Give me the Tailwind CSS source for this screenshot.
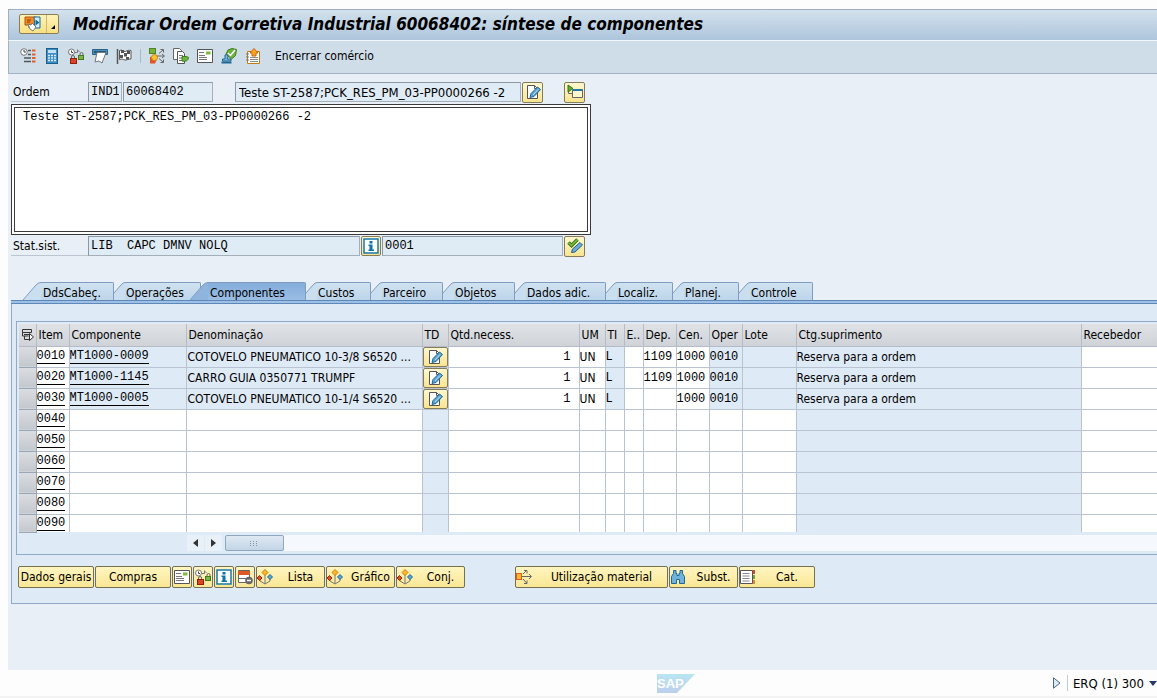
<!DOCTYPE html>
<html lang="pt-BR">
<head>
<meta charset="utf-8">
<title>Modificar Ordem Corretiva Industrial 60068402: síntese de componentes</title>
<script src="https://cdn.jsdelivr.net/npm/@tailwindcss/browser@4"></script>
</head>
<body class="min-h-screen flex flex-col overflow-x-hidden bg-[#fdfdfe] font-['DejaVu_Sans_Condensed','Noto_Sans',sans-serif] text-[12px] leading-4 text-black">
<svg class="hidden" aria-hidden="true">
  <symbol id="i-services" viewBox="0 0 20 18">
    <path d="M2 2h11v8H9l-3 3v-3H2z" fill="#f08a24" stroke="#b4500c"/><path d="M4 5h4M4 7h3" stroke="#8a3a08"/>
    <path d="M11 2h6v11h-5z" fill="#d6ecfa" stroke="#146a9c"/><path d="M12.500 4.500l4 3-4 3z" fill="#146a9c"/>
    <path d="M5 9l3 1 1-2 4 4-3 4-3-2z" fill="#fff" stroke="#7a7a7a"/>
  </symbol>
  <symbol id="i-clocklist" viewBox="0 0 16 16">
    <circle cx="4" cy="4" r="3.3" fill="#fff" stroke="#777"/><path d="M4 2v2h2" fill="none" stroke="#444"/>
    <path d="M8 2.500h3M8 6.500h3M4 10h7M4 13.500h7" stroke="#555" stroke-width="1.500"/><path d="M12 2.500h3.500M12 6.500h3.500M12 10h3.500M12 13.500h3.500" stroke="#e0602c" stroke-width="2"/>
  </symbol>
  <symbol id="i-calc" viewBox="0 0 16 16">
    <rect x="2.500" y=".5" width="11" height="15" fill="#3f8fc4" stroke="#1b5f8f"/><rect x="4" y="2" width="8" height="3" fill="#c4e2f4"/>
    <path d="M4 7.500h8M4 10h8M4 12.500h8" stroke="#d9eefa" stroke-width="1.500" stroke-dasharray="2 1"/>
  </symbol>
  <symbol id="i-clocklock" viewBox="0 0 16 16">
    <circle cx="3.500" cy="4" r="3" fill="#fff" stroke="#777"/><path d="M3.500 2.500v2H5" fill="none" stroke="#444"/>
    <path d="M7 4.500h2.500V1.500M9.500 2l2 2" fill="none" stroke="#777"/>
    <path d="M12 8V6a1.500 1.500 0 0 1 3 0v2" fill="none" stroke="#666"/><rect x="10.500" y="7.500" width="5" height="4" fill="#7ab648" stroke="#44791d"/>
    <path d="M3.500 11V9a1.500 1.500 0 0 1 3 0v2" fill="none" stroke="#666"/><rect x="2.500" y="10.500" width="6" height="5" fill="#d9472b" stroke="#94200c"/>
  </symbol>
  <symbol id="i-print" viewBox="0 0 16 16">
    <path d="M.5 1.500h15v5h-15z" fill="#4c8fb9" stroke="#2b6289"/><path d="M2 4h12" stroke="#1b4462" stroke-width="1.500"/>
    <path d="M5 4.500h9l-4 10.500-3-2-4 1z" fill="#fff" stroke="#6d7780"/>
  </symbol>
  <symbol id="i-flag" viewBox="0 0 16 16">
    <path d="M1.500 1v15" stroke="#555" stroke-width="1.500"/><path d="M3.500 2.500c3-1.500 3 1.500 6 1 2-1 3-1.500 5.500-1v8.500c-3-.5-4 1.500-6 1s-3-1.500-5.500-.5z" fill="#fff" stroke="#555"/>
    <path d="M5 2h3v3H5zM11 3h3v3h-3zM8 5h3v3.500H8zM4 7h3v3H4zM10 9h3v2.500h-3z" fill="#555"/>
  </symbol>
  <symbol id="i-puzzle" viewBox="0 0 16 16">
    <rect x=".5" y=".5" width="6" height="5" fill="#74b23c" stroke="#4b8420"/><path d="M1 15.500V9l4-1 3 3-2 4.500z" fill="#e2532a"/><circle cx="5.500" cy="9.500" r="3" fill="#f9c230" stroke="#c98a0c"/>
    <path d="M8 8h7M10 5.500l4-3.500M10 10.500l4 3.500" stroke="#666"/><path d="M13 6l2.500 2-2.500 2M11.500 1.500h3v3M11.500 14.500h3v-3" fill="none" stroke="#666"/>
  </symbol>
  <symbol id="i-copies" viewBox="0 0 16 16">
    <path d="M.5.500h6l2 2v9h-8z" fill="#fff" stroke="#666"/><path d="M4.500 3.500h5l2 2v10h-7z" fill="#fff" stroke="#555"/><path d="M6 7.500h4M6 10h4M6 12.500h4" stroke="#777"/>
    <path d="M9 8.500h3c3 0 3.500 1 3.500 1 0 3-3 4.500-6.500 3.500z" fill="#6cb33f" stroke="#3c7d17"/>
  </symbol>
  <symbol id="i-note" viewBox="0 0 16 16">
    <path d="M.5 1.500h15v13H.5z" fill="#fff" stroke="#555"/><path d="M2 4.500h5M2 7.500h6M2 9.500h8M2 11.500h8" stroke="#777"/><rect x="9" y="3.500" width="4.500" height="3" fill="#7eb83f"/>
  </symbol>
  <symbol id="i-stamp" viewBox="0 0 16 16">
    <path d="M5 6l2-4 4-1.500 4.500 1-1 6-4 3.500z" fill="#6cb33f" stroke="#3c7d17"/><path d="M7 5l2.500 2.500L14 2" fill="none" stroke="#fff" stroke-width="1.500"/>
    <path d="M4 7a2 2 0 0 1 3 2l-1 2h4v2H1.500v-2H4z" fill="#7dbbe0" stroke="#1f6795"/><path d="M.5 14.500h10" stroke="#1f6795" stroke-width="2"/>
  </symbol>
  <symbol id="i-book" viewBox="0 0 16 16">
    <path d="M2.500 3.500h12v12h-12z" fill="#fff" stroke="#c27c14"/><path d="M1 6h3M1 9h3M1 12h3" stroke="#777"/><path d="M5 9.500h8M5 11.500h8M5 13.500h8" stroke="#888"/>
    <path d="M9 .5l4 4.500h-2v3H7V5H5z" fill="#f7a823" stroke="#d4610f"/>
  </symbol>
  <symbol id="i-edit" viewBox="0 0 16 16">
    <path d="M2.500 1.500h7l3 3v10h-10z" fill="#fff" stroke="#555"/><path d="M9.500 1.500v3h3" fill="none" stroke="#555"/>
    <path d="M5 13.500l1-4 6.500-6.500 3 2.500-6.500 7z" fill="#5ba3d0" stroke="#1f6795"/><path d="M8 11l5-5.500" stroke="#bfe0f4"/>
  </symbol>
  <symbol id="i-open" viewBox="0 0 16 16">
    <path d="M1 1l5 3.500L1 8z" fill="#5eaa35" stroke="#37751a"/><path d="M5.500 5.500h10v8h-10z" fill="#fff9cf" stroke="#666"/><path d="M6 6h9.500" stroke="#1f77ae" stroke-width="2"/><path d="M1.500 8v1.500h4" fill="none" stroke="#666"/>
  </symbol>
  <symbol id="i-info" viewBox="0 0 16 16">
    <path d="M1 1h14v14H1z" fill="#fff" stroke="#1779ac" stroke-width="1.500"/><path d="M6.500 3h3v2.500h-3zM5.500 6.500h4v5H11V13H5.500v-1.500h1V8h-1z" fill="#0f72a8"/>
  </symbol>
  <symbol id="i-checkedit" viewBox="0 0 16 16">
    <path d="M1.500 4.500l3 3L10.500 1.500" fill="none" stroke="#37751a" stroke-width="3.500"/><path d="M1.500 4.500l3 3L10.500 1.500" fill="none" stroke="#7dc142" stroke-width="1.500"/>
    <path d="M4.500 14.500l1-3.500 7.500-6.500 2.500 2.500-7.500 7z" fill="#6aacd8" stroke="#285f92"/>
  </symbol>
  <symbol id="i-delrow" viewBox="0 0 16 16">
    <path d="M1.500 1.500h11v12h-11z" fill="#fff" stroke="#666"/><path d="M1 4h12" stroke="#dd5a26" stroke-width="4"/><path d="M2 9.500h8" stroke="#666"/>
    <circle cx="12" cy="11.500" r="3.800" fill="#666"/><path d="M10 11.500h4" stroke="#fff" stroke-width="1.500"/>
  </symbol>
  <symbol id="i-tree" viewBox="0 0 16 16">
    <path d="M8 6v9M3 10v2l5 3 5-3v-2" fill="none" stroke="#777"/><path d="M8 .5l3 3-3 3-3-3z" fill="#fbb62a" stroke="#cf7d0a"/><path d="M2.500 6.500L5 9l-2.500 2.500L0 9z" fill="#e04f28" stroke="#9c2c0d"/><path d="M13 5.500L15.500 8 13 10.500 10.500 8z" fill="#5aa5d4" stroke="#1f6795"/>
  </symbol>
  <symbol id="i-usage" viewBox="0 0 16 16">
    <rect x=".5" y="4.500" width="5" height="6" fill="#fbb62a" stroke="#dd5a26"/><path d="M6 7.500h9M13 5l2.500 2.500L13 10M7 5l3.500-3.500M7 10l3.500 4M8 1.500h3v3M8 14.500h3v-3" fill="none" stroke="#666"/>
  </symbol>
  <symbol id="i-find" viewBox="0 0 16 16">
    <path d="M3.500 1.500h2.500v3h1v2h2v-2h1v-3h2.500v3l2 3v7h-5v-4h-3v4h-5v-7l2-3z" fill="#6fb3dd" stroke="#1f6795"/>
  </symbol>
  <symbol id="i-catalog" viewBox="0 0 16 16">
    <path d="M.5 1.500h12v13H.5z" fill="#fff" stroke="#555"/><path d="M2.500 4.500h7M2.500 7h7M2.500 9.500h7M2.500 12h7" stroke="#888"/><path d="M13 1h2v4h-2z" fill="#d9472b"/><path d="M13 6h2v4h-2z" fill="#6aa837"/><path d="M13 11h2v4h-2z" fill="#e7832c"/>
  </symbol>
  <symbol id="i-select" viewBox="0 0 14 14">
    <path d="M1.500 1.500h9v3h-9zM1.500 4.500V8h6M3.500 8v3.500h5M3 6.500h5" fill="none" stroke="#333"/><path d="M8.500 5.500v7l4-3.500z" fill="#fff" stroke="#333"/>
  </symbol>
</svg>

<main class="mt-[9px] ml-2 flex-1 flex flex-col bg-[#e8eff6]">
  <header class="h-8 shrink-0 flex items-center pl-[10px] pb-[3px] border-t border-l border-b border-t-[#9fb0c4] border-l-[#9fb0c4] border-b-[#f2f7fb] bg-linear-to-b from-[#d3e1ec] to-[#adc5dc]">
    <button aria-label="Serviços para objeto" class="h-5 w-10 flex rounded-xs border border-[#8a7d55] bg-linear-to-b from-[#fdf3b8] to-[#f8e083]">
      <span class="flex-1 flex items-center justify-center border-r border-[#c9b878]"><svg class="w-5 h-[18px]"><use href="#i-services"/></svg></span>
      <span class="w-[11px] self-stretch flex items-end justify-center pb-1"><svg class="w-1 h-1" viewBox="0 0 4 4"><path d="M4 0v4H0z"/></svg></span>
    </button>
    <h1 class="ml-[14px] text-[17px] leading-6 font-bold italic whitespace-nowrap">Modificar Ordem Corretiva Industrial 60068402: síntese de componentes</h1>
  </header>
  <nav aria-label="Funções" class="h-[33px] shrink-0 flex items-center pl-[7px] pb-[3px] border-l border-b border-[#a3b1c4] bg-[#cfdde9]">
    <button aria-label="Operações" class="w-6 flex justify-center"><svg class="size-4"><use href="#i-clocklist"/></svg></button>
    <button aria-label="Calcular" class="w-6 flex justify-center"><svg class="size-4"><use href="#i-calc"/></svg></button>
    <button aria-label="Liberar" class="w-6 flex justify-center"><svg class="size-4"><use href="#i-clocklock"/></svg></button>
    <button aria-label="Imprimir" class="w-6 flex justify-center"><svg class="size-4"><use href="#i-print"/></svg></button>
    <button aria-label="Encerrar" class="w-6 flex justify-center"><svg class="size-4"><use href="#i-flag"/></svg></button>
    <span class="w-px h-[14px] mx-1 bg-[#a9b9ca]"></span>
    <button aria-label="Disponibilidade" class="w-6 flex justify-center"><svg class="size-4"><use href="#i-puzzle"/></svg></button>
    <button aria-label="Copiar" class="w-6 flex justify-center"><svg class="size-4"><use href="#i-copies"/></svg></button>
    <button aria-label="Nota" class="w-6 flex justify-center"><svg class="size-4"><use href="#i-note"/></svg></button>
    <button aria-label="Aprovar" class="w-6 flex justify-center"><svg class="size-4"><use href="#i-stamp"/></svg></button>
    <button aria-label="Catálogo" class="w-6 flex justify-center"><svg class="size-4"><use href="#i-book"/></svg></button>
    <button class="ml-[10px] pt-px whitespace-nowrap">Encerrar comércio</button>
  </nav>

  <section class="pl-[3px] pt-[7px]">
    <div class="flex items-center h-[22px]">
      <label for="ordem" class="w-[77px] h-5 pl-[2px] pt-[2px] border-b border-[#bcc6d2]">Ordem</label>
      <input aria-label="Tipo de ordem" readonly value="IND1" class="w-[34px] h-5 px-[2px] border border-[#a5afba] border-t-[#8c98a6] border-l-[#8c98a6] bg-[#dfebf5] font-['Liberation_Mono',monospace]">
      <input id="ordem" readonly value="60068402" class="ml-px w-[90px] h-5 px-[2px] border border-[#a5afba] border-t-[#8c98a6] border-l-[#8c98a6] bg-[#dfebf5] font-['Liberation_Mono',monospace]">
      <input aria-label="Descrição" readonly value="Teste ST-2587;PCK_RES_PM_03-PP0000266 -2" class="ml-[22px] w-[286px] h-5 px-[3px] text-[13px] border border-[#a5afba] border-t-[#8c98a6] border-l-[#8c98a6] bg-[#dfebf5]">
      <button aria-label="Editar texto" class="ml-px size-[21px] flex items-center justify-center rounded-xs border border-[#857b58] bg-linear-to-b from-[#fff8cf] to-[#f9e48f]"><svg class="size-4"><use href="#i-edit"/></svg></button>
      <button aria-label="Abrir" class="ml-[21px] size-[21px] flex items-center justify-center rounded-xs border border-[#857b58] bg-linear-to-b from-[#fff8cf] to-[#f9e48f]"><svg class="size-4"><use href="#i-open"/></svg></button>
    </div>
    <textarea aria-label="Texto descritivo" class="mt-px block w-[580px] h-[131px] resize-none border-4 border-double border-[#3a3a3a] bg-white px-2 py-px leading-4 font-['Liberation_Mono',monospace]">Teste ST-2587;PCK_RES_PM_03-PP0000266 -2</textarea>
    <div class="flex items-center h-[22px]">
      <label for="stat" class="w-[77px] h-5 pl-[2px] pt-[2px] border-b border-[#bcc6d2]">Stat.sist.</label>
      <input id="stat" readonly value="LIB  CAPC DMNV NOLQ" class="w-[272px] h-5 px-[2px] border border-[#a5afba] border-t-[#8c98a6] border-l-[#8c98a6] bg-[#dfebf5] font-['Liberation_Mono',monospace]">
      <button aria-label="Informação" class="ml-px size-5 flex items-center justify-center rounded-xs border border-[#857b58] bg-linear-to-b from-[#fff8cf] to-[#f9e48f]"><svg class="size-4"><use href="#i-info"/></svg></button>
      <input aria-label="Status usuário" readonly value="0001" class="ml-px w-[181px] h-5 px-[2px] border border-[#a5afba] border-t-[#8c98a6] border-l-[#8c98a6] bg-[#dfebf5] font-['Liberation_Mono',monospace]">
      <button aria-label="Modificar status" class="ml-px size-[21px] flex items-center justify-center rounded-xs border border-[#857b58] bg-linear-to-b from-[#fff8cf] to-[#f9e48f]"><svg class="size-4"><use href="#i-checkedit"/></svg></button>
    </div>
  </section>

  <section class="mt-[25px] pl-[3px]">
    <div id="tabs" role="tablist" class="flex h-[18px] pl-3"></div>
    <div class="h-1 border-y border-[#5f88b8] bg-[#9dc0e6]"></div>
    <div role="tabpanel" class="border-l border-b border-[#93a9c8] bg-[#deeaf5] pt-[17px] pb-[15px]">
      <div class="ml-[4px] border-l border-t border-b border-[#93a9c8] pt-[2px] pb-[2px] pl-[2px]">
        <table class="w-full table-fixed border-collapse">
          <colgroup>
            <col class="w-[17px]"><col class="w-[33px]"><col class="w-[117px]"><col class="w-[236px]"><col class="w-[26px]"><col class="w-[131px]"><col class="w-[26px]"><col class="w-[19px]"><col class="w-[19px]"><col class="w-[33px]"><col class="w-[33px]"><col class="w-[33px]"><col class="w-[54px]"><col class="w-[285px]"><col>
          </colgroup>
          <thead id="head"></thead>
          <tbody id="rows"></tbody>
        </table>
        <div class="mt-[2px] flex items-center h-[17px] pl-[168px]">
          <button aria-label="Rolar à esquerda" class="w-[17px] h-4 flex items-center justify-center bg-[#e9f1f8]"><svg class="w-[5px] h-2" viewBox="0 0 5 8"><path d="M5 0v8L0 4z" fill="#333"/></svg></button>
          <button aria-label="Rolar à direita" class="ml-px w-[17px] h-4 flex items-center justify-center bg-[#e9f1f8]"><svg class="w-[5px] h-2" viewBox="0 0 5 8"><path d="M0 0v8l5-4z" fill="#333"/></svg></button>
          <span class="ml-[3px] w-[59px] h-4 flex items-center justify-center rounded-xs border border-[#8fa6bf] bg-linear-to-b from-[#dfe9f3] to-[#c3d5e6]"><svg class="w-[9px] h-[7px]" viewBox="0 0 9 7"><path d="M0 1.500h9M0 3.500h9M0 5.500h9" stroke="#8296ad" stroke-dasharray="1 2"/></svg></span>
          <span class="flex-1 h-4 bg-[#f5f9fd]"></span>
        </div>
      </div>
      <div id="actions" class="mt-[11px] pl-[6px] flex gap-px items-center"></div>
    </div>
  </section>
</main>

<footer class="h-7 shrink-0 flex items-center pl-[657px] border-b-2 border-[#f3f3f3] bg-[#fdfdfe]">
  <svg class="w-[38px] h-[19px]" viewBox="0 0 38 19" role="img" aria-label="SAP">
    <defs><linearGradient id="lg" x2="0" y2="1"><stop stop-color="#b9e6f3"/><stop offset="1" stop-color="#bccfea"/></linearGradient></defs>
    <path d="M0 0h38L20 19H0z" fill="url(#lg)"/><text x="0" y="14" font-family="Liberation Sans" font-weight="bold" font-size="13" fill="#fff">SAP</text>
  </svg>
  <div class="ml-auto flex items-center whitespace-nowrap">
    <button aria-label="Expandir"><svg class="w-2 h-3" viewBox="0 0 8 12"><path d="M.5.800v10.400L7 6z" fill="#dcebf6" stroke="#4a6784"/></svg></button>
    <span class="ml-[6px] w-px h-4 bg-[#c6ccd4]"></span>
    <button class="ml-[5px] pt-px flex items-center text-[13px]">ERQ (1) 300<svg class="ml-[5px] w-2 h-[5px]" viewBox="0 0 8 5"><path d="M0 0h8L4 5z" fill="#25396b"/></svg></button>
  </div>
</footer>

<script>
const icon = n => `<svg class="size-4 shrink-0"><use href="#i-${n}"/></svg>`;

// Tabs: kind decides the shape of the slanted left edge
const tabs = [
  ['DdsCabeç.', 'first', 'w-[91px]'], ['Operações', '', 'w-[87px]'], ['Componentes', 'active', 'w-[116px]'],
  ['Custos', '', 'w-[65px]'], ['Parceiro', '', 'w-[72px]'], ['Objetos', '', 'w-[72px]'],
  ['Dados adic.', '', 'w-[91px]'], ['Localiz.', '', 'w-[67px]'], ['Planej.', '', 'w-[66px]'], ['Controle', '', 'w-[74px]']
];
document.getElementById('tabs').innerHTML = tabs.map(([t, kind, w]) => {
  const on = kind === 'active', wide = kind !== '';
  const edge = wide
    ? `<svg class="w-[18px] h-[18px] shrink-0" viewBox="0 0 18 18"><path d="M0 18L13 3Q15 .5 18 .5V18z" fill="${on ? '#8fb5df' : '#c9deee'}"/><path d="M0 18L13 3Q15 .5 18 .5" fill="none" stroke="#7f9cc0"/></svg>`
    : `<svg class="w-[11px] h-[18px] shrink-0" viewBox="0 0 11 18"><path d="M0 11L7 3Q9 .5 11 .5V18H0z" fill="#c9deee"/><path d="M0 11L7 3Q9 .5 11 .5" fill="none" stroke="#7f9cc0"/></svg>`;
  return `<button role="tab" aria-selected="${on}" class="${w} h-[18px] flex shrink-0 text-left whitespace-nowrap ${on ? 'relative z-10 -ml-[11px]' : ''}">${edge}<span class="flex-1 h-[18px] pt-[2px] ${wide ? 'pl-[2px]' : 'pl-px'} border-t border-r border-[#7f9cc0] rounded-tr-xs ${on ? 'bg-linear-to-b from-[#84addb] to-[#9abde3]' : 'bg-linear-to-b from-[#cfe2f0] to-[#bdd5ea]'}">${t}</span></button>`;
}).join('');

const heads = ['', 'Item', 'Componente', 'Denominação', 'TD', 'Qtd.necess.', 'UM', 'TI', 'E..', 'Dep.', 'Cen.', 'Oper', 'Lote', 'Ctg.suprimento', 'Recebedor'];
document.getElementById('head').innerHTML = '<tr class="h-[22px] bg-linear-to-b from-[#e0e2e5] to-[#cfd3d8]">' + heads.map((h, i) =>
  `<th class="p-0 pl-[2px] text-left font-normal whitespace-nowrap overflow-hidden border-r border-b border-[#b3bcc8] last:border-r-0">${i ? h : '<svg class="size-[14px]" role="img" aria-label="Selecionar"><use href="#i-select"/></svg>'}</th>`).join('') + '</tr>';

const data = [
  ['0010', 'MT1000-0009', 'COTOVELO PNEUMATICO 10-3/8 S6520 ...', '1109'],
  ['0020', 'MT1000-1145', 'CARRO GUIA 0350771 TRUMPF', '1109'],
  ['0030', 'MT1000-0005', 'COTOVELO PNEUMATICO 10-1/4 S6520 ...', ''],
  ['0040'], ['0050'], ['0060'], ['0070'], ['0080'], ['0090']
];
const cell = (html, blue, mono, extra = '') =>
  `<td class="p-0 whitespace-nowrap overflow-hidden border-r border-b border-[#b9c3d2] group-last:border-b-0 last:border-r-0 ${blue ? 'bg-[#deeaf5]' : 'bg-white'} ${mono ? "font-['Liberation_Mono',monospace]" : ''} ${extra}">${html}</td>`;
const link = t => `<a href="#" class="block w-fit leading-[14px] border-b border-black">${t}</a>`;
document.getElementById('rows').innerHTML = data.map(([n, c, d, dep]) => {
  const f = !!c;
  return '<tr class="group h-[21px] last:h-[18px]">' +
    '<td class="p-0 border border-[#9aa6b5] border-l-0 bg-linear-to-b from-[#dadde1] to-[#c3c8ce]"></td>' +
    cell(link(n), false, true) + cell(f ? link(c) : '', f, true) + cell(f ? d : '', f, false, 'pl-px') +
    cell(f ? `<button aria-label="Texto do item ${n}" class="w-full h-5 flex items-center justify-center rounded-xs border border-[#857b58] bg-linear-to-b from-[#fff8cf] to-[#f9e48f]">${icon('edit')}</button>` : '', true) +
    cell(f ? '1' : '', false, true, 'text-right pr-2') + cell(f ? 'UN' : '', false, false) + cell(f ? 'L' : '', f, true) + cell('', false) +
    cell(dep || '', false, true) + cell(f ? '1000' : '', false, true) + cell(f ? '0010' : '', f, true) + cell('', f) +
    cell(f ? 'Reserva para a ordem' : '', true) + cell('', false) + '</tr>';
}).join('');

// Action buttons: label, icon, width, accessible name
const acts = [
  ['Dados gerais', '', 'w-[76px]'], ['Compras', '', 'w-[76px]'], ['', 'note', 'w-5', 'Nota'], ['', 'clocklock', 'w-5', 'Reservas'],
  ['', 'info', 'w-5', 'Informação'], ['', 'delrow', 'w-5', 'Eliminar linha'], ['Lista', 'tree', 'w-[69px]'], ['Gráfico', 'tree', 'w-[69px]'],
  ['Conj.', 'tree', 'w-[69px]'], ['Utilização material', 'usage', 'w-[153px] ml-[49px]'], ['Subst.', 'find', 'w-[69px]'], ['Cat.', 'catalog', 'w-[76px]']
];
document.getElementById('actions').innerHTML = acts.map(([t, i, w, l]) =>
  `<button aria-label="${t || l}" class="${w} h-[22px] flex items-center ${t && i ? '' : 'justify-center'} shrink-0 whitespace-nowrap rounded-xs border border-[#77704f] bg-linear-to-b from-[#fff5c0] to-[#fae795]">${i ? icon(i) : ''}${t ? `<span class="${i ? 'flex-1 pl-1 text-center' : ''}">${t}</span>` : ''}</button>`).join('');
</script>
</body>
</html>
